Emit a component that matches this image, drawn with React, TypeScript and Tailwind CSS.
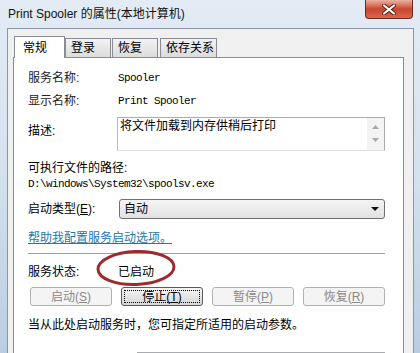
import React from 'react';

const ui = "font-['Liberation_Sans','Noto_Sans_CJK_SC',sans-serif]";
const mono = "font-['Liberation_Mono','Noto_Sans_CJK_SC',monospace] text-[11px] tracking-[-0.6px]";

// ─── Small pieces ─────────────────────────────────────────────────────────────

function Tab({ label, active, className }: { label: string; active?: boolean; className: string }) {
  if (active) {
    return (
      <div className={`relative z-10 h-[22px] border border-b-0 border-[#898c95] bg-white flex items-center pl-[8px] ${className}`}>
        {label}
      </div>
    );
  }
  return (
    <div className={`h-[19px] mb-[1px] border border-b-0 border-[#898c95] bg-gradient-to-b from-[#f3f3f3] to-[#dcdcdc] flex items-center pl-[5px] ${className}`}>
      {label}
    </div>
  );
}

function Btn({ label, hot, disabled }: { label: string; hot: string; disabled?: boolean }) {
  if (disabled) {
    return (
      <div className="w-[82px] h-[19px] rounded-[3px] border border-[#adb2b5] bg-[#f4f4f4] text-[#8a8a8a] flex items-center justify-center">
        {label}(<span className="underline">{hot}</span>)
      </div>
    );
  }
  return (
    <div className="w-[82px] h-[19px] rounded-[3px] border border-[#5a5a5a] bg-gradient-to-b from-[#f5f5f5] to-[#d6d6d6] p-[2px]">
      <div className="w-full h-full border border-dotted border-black flex items-center justify-center">
        {label}(<span className="underline">{hot}</span>)
      </div>
    </div>
  );
}

// ─── Dialog ───────────────────────────────────────────────────────────────────

export default function App() {
  return (
    <div className={`w-[420px] h-[353px] overflow-hidden relative bg-gradient-to-b from-[#e3ecf5] via-[#d4e1ee] to-[#b9cde2] text-[12px] text-black ${ui}`}>
      {/* Title bar */}
      <div className="h-[28px] flex items-center pl-[8px] text-[#111]">Print Spooler 的属性(本地计算机)</div>

      {/* Close button */}
      <div className="absolute top-0 left-[365px] w-[48px] h-[19px] rounded-b-[4px] border border-t-0 border-[#6b2b22] bg-gradient-to-b from-[#eab1a3] via-[#c9452f] to-[#d8684f] flex items-center justify-center">
        <svg width="14" height="11" viewBox="0 0 14 11">
          <path d="M2 1.5 L12 9.5 M12 1.5 L2 9.5" stroke="#5a1d16" strokeWidth="4" strokeLinecap="round" />
          <path d="M2 1.5 L12 9.5 M12 1.5 L2 9.5" stroke="#ffffff" strokeWidth="2.2" strokeLinecap="round" />
        </svg>
      </div>

      {/* Client area */}
      <div className="ml-[7px] w-[407px] h-[325px] border border-b-0 border-[#8a97a5] bg-[#f0f0f0] pt-[7px] pl-[5px]">
        {/* Tabs */}
        <div className="h-[22px] flex items-end pl-[1px]">
          <Tab label="常规" active className="w-[51px]" />
          <Tab label="登录" className="w-[46px]" />
          <Tab label="恢复" className="w-[46px] ml-[1px]" />
          <Tab label="依存关系" className="w-[57px] ml-[2px] pl-[3px]" />
        </div>

        {/* Panel */}
        <div className="-mt-px w-[391px] h-[300px] border border-[#898c95] bg-white pl-[14px] pt-[12px]">
          <div className="h-[16px] flex items-center">
            <span className="w-[90px] text-[#222]">服务名称:</span>
            <span className={mono}>Spooler</span>
          </div>
          <div className="h-[16px] mt-[7px] flex items-center">
            <span className="w-[90px] text-[#222]">显示名称:</span>
            <span className={mono}>Print Spooler</span>
          </div>

          <div className="mt-[8px] flex items-start">
            <span className="w-[89px] mt-[6px] h-[16px] leading-[16px]">描述:</span>
            <div className="w-[268px] h-[34px] border border-[#a9abb2] border-l-[#b8bac0] border-b-[#dfe3e8] flex">
              <div className="flex-1 pl-[2px] pt-px leading-[15px]">将文件加载到内存供稍后打印</div>
              <div className="w-[17px] bg-[#f3f3f3] flex flex-col items-center pt-[7px] gap-[9px]">
                <svg width="7" height="4" viewBox="0 0 7 4"><path d="M0 4 L3.5 0 L7 4 Z" fill="#a8a8a8" /></svg>
                <svg width="7" height="4" viewBox="0 0 7 4"><path d="M0 0 L3.5 4 L7 0 Z" fill="#a8a8a8" /></svg>
              </div>
            </div>
          </div>

          <div className="mt-[9px] h-[16px] leading-[16px]">可执行文件的路径:</div>
          <div className={`h-[16px] leading-[16px] ${mono}`}>D:\windows\System32\spoolsv.exe</div>

          <div className="mt-[7px] flex items-center">
            <span className="w-[91px]">
              启动类型(<span className="underline">E</span>):
            </span>
            <div className="w-[266px] h-[20px] rounded-[3px] border border-[#707070] bg-gradient-to-b from-[#f4f4f4] to-[#e2e2e2] flex items-center justify-between pl-[4px] pr-[5px]">
              <span>自动</span>
              <svg width="8" height="4" viewBox="0 0 8 4"><path d="M0 0 L8 0 L4 4 Z" fill="#111" /></svg>
            </div>
          </div>

          <div className="mt-[11px] h-[16px] leading-[16px] text-[#2477a8] underline">帮助我配置服务启动选项。</div>

          <div className="mt-[7px] w-[357px] border-t border-[#a0a0a0] border-b border-b-white" />

          <div className="relative mt-[9px] h-[16px] flex items-center">
            <span className="w-[90px]">服务状态:</span>
            <span>已启动</span>
            <svg className="absolute left-[67px] top-[-16px]" width="82" height="40" viewBox="0 0 82 40">
              <ellipse cx="41" cy="20" rx="38" ry="16.5" fill="none" stroke="#9c2a2e" strokeWidth="3" transform="rotate(-2 41 20)" />
            </svg>
          </div>

          <div className="mt-[7px] ml-[2px] flex gap-[9px]">
            <Btn label="启动" hot="S" disabled />
            <Btn label="停止" hot="T" />
            <Btn label="暂停" hot="P" disabled />
            <Btn label="恢复" hot="R" disabled />
          </div>

          <div className="mt-[11px] h-[16px] leading-[16px]">当从此处启动服务时，您可指定所适用的启动参数。</div>

          <div className="mt-[19px] ml-[109px] w-[248px] h-[20px] border border-[#a9abb2]" />
        </div>
      </div>
    </div>
  );
}
